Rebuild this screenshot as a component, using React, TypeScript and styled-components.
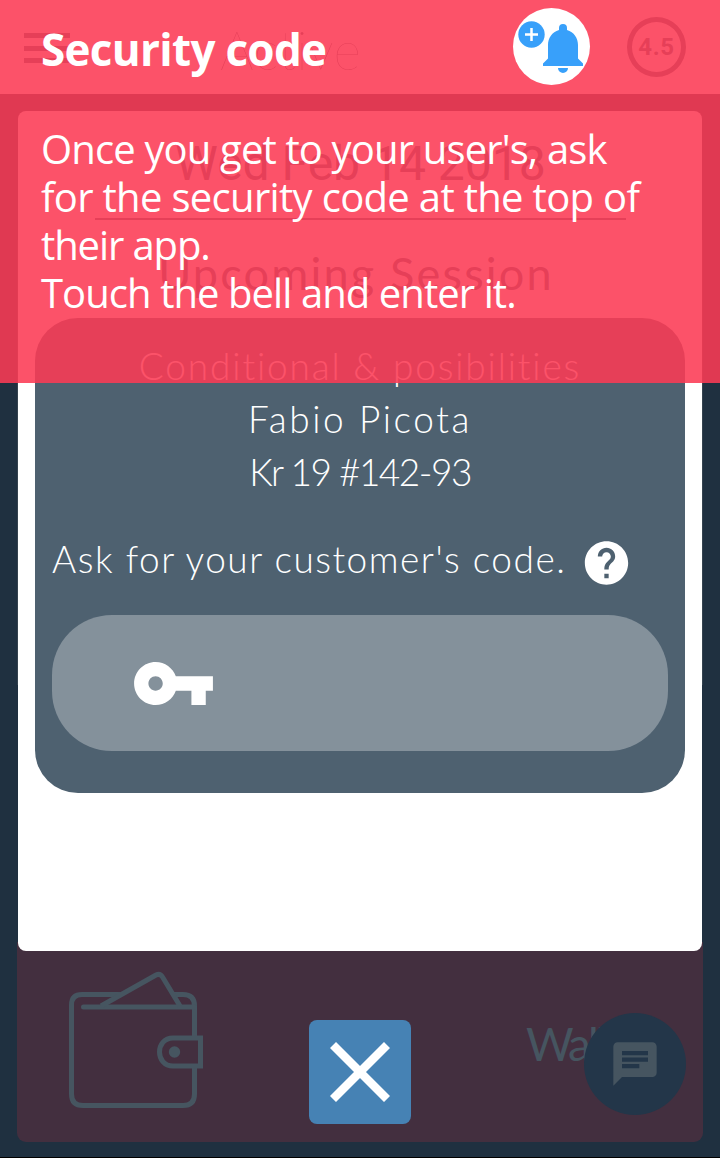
import React from "react";
import styled, { createGlobalStyle } from "styled-components";

const Global = createGlobalStyle`
  *, *::before, *::after { box-sizing: border-box; }
  body { margin: 0; background: #1f3040; }
  p, h1, h2 { margin: 0; font-weight: inherit; }
`;

const slate = "#4e6170";
const round = `Lato, "Open Sans", sans-serif`;
const exo = `"Open Sans", "Noto Sans", sans-serif`;

const Screen = styled.div`
  position: relative;
  width: 720px;
  height: 1158px;
  overflow: hidden;
  display: flex;
  flex-direction: column;
  background: #1f3040;
  border-bottom: 1px solid #000;
`;

const Header = styled.header`
  flex: none;
  height: 94px;
  padding: 0 34px 0 24px;
  display: flex;
  align-items: center;
  background: #fff;
  color: ${slate};
`;

const MenuIcon = styled.div`
  width: 46px;
  height: 30px;
  margin-top: 2px;
  display: flex;
  flex-direction: column;
  justify-content: space-between;
  i { height: 5px; background: ${slate}; }
`;

const Status = styled.h2`
  margin: 6px 0 0 150px;
  font: 100 53px/60px ${round};
  letter-spacing: 0.4px;
`;

const Rating = styled.div`
  width: 59px;
  height: 60px;
  margin-left: auto;
  border: 5px solid ${slate};
  border-radius: 50%;
  font: 700 24px/51px Roboto, sans-serif;
  letter-spacing: 0.6px;
  text-align: center;
`;

const Card = styled.main`
  flex: none;
  height: 840px;
  padding: 0 17px;
  border-radius: 8px;
  background: #fff;
  color: ${slate};
`;

const DateLine = styled.div`
  width: 531px;
  height: 109px;
  margin: 0 0 0 60px;
  padding-top: 25px;
  border-bottom: 2px solid ${slate};
  font: 400 48px/56px Roboto, sans-serif;
  text-align: center;
  white-space: nowrap;
`;

const Upcoming = styled.h2`
  height: 98px;
  padding: 26px 8px 0 0;
  font: 400 45px/54px ${round};
  letter-spacing: 2.2px;
  text-align: center;
`;

const Session = styled.section`
  height: 475px;
  padding: 21px 17px 0;
  border-radius: 43px;
  background: ${slate};
  color: #fff;
`;

const Detail = styled.p<{ $ls: number }>`
  height: 53px;
  font: 300 37px/53px ${round};
  letter-spacing: ${(p) => p.$ls}px;
  text-align: center;
  white-space: nowrap;
`;

const Ask = styled.div`
  display: flex;
  align-items: flex-start;
  height: 53px;
  margin-top: 34px;
  font: 300 37px/53px ${round};
  letter-spacing: 1.5px;
  white-space: nowrap;
  span { width: 528px; }
  svg { margin-top: 5px; flex: none; }
`;

const CodeField = styled.div`
  height: 136px;
  margin-top: 30px;
  padding-left: 82px;
  display: flex;
  align-items: center;
  border-radius: 60px;
  background: #84919b;
`;

const Wallet = styled.section`
  position: relative;
  flex: none;
  height: 200px;
  margin: -9px 17px 0;
  padding: 28px 0 0 50px;
  display: flex;
  border-radius: 0 0 9px 9px;
  background: #432f3f;
  z-index: 0;
`;

const CardLayer = styled.div`
  position: relative;
  z-index: 1;
  margin: 17px 17px 0;
  padding: 0 1px;
  background: linear-gradient(#35434f, #35434f) 0 129px / 100% 445px no-repeat;
`;

const WalletLabel = styled.span`
  margin: 46px 0 0 321px;
  font: 400 46px/56px ${round};
  letter-spacing: -3px;
  color: #465560;
`;

const Fab = styled.div`
  position: absolute;
  left: 584px;
  top: 1013px;
  z-index: 2;
  width: 102px;
  height: 102px;
  border-radius: 50%;
  background: #233649;
  display: flex;
  align-items: center;
  justify-content: center;
`;

const Close = styled.button`
  position: absolute;
  left: 309px;
  top: 1020px;
  z-index: 2;
  width: 102px;
  height: 104px;
  padding: 0;
  border: 0;
  border-radius: 8px;
  background: #4682b4;
  display: flex;
  align-items: center;
  justify-content: center;
`;

const Coach = styled.aside`
  position: absolute;
  left: 0;
  top: 0;
  z-index: 3;
  width: 720px;
  height: 383px;
  padding: 19px 0 0 41px;
  background: rgba(252, 58, 84, 0.88);
  color: #fff;
`;

const CoachTitle = styled.h1`
  height: 106px;
  font: 700 44px/60px ${exo};
  letter-spacing: -0.7px;
  white-space: nowrap;
`;

const CoachLine = styled.p<{ $ls: number }>`
  font: 400 40px/48px ${exo};
  letter-spacing: ${(p) => p.$ls}px;
  white-space: nowrap;
`;

const Bell = styled.div`
  position: absolute;
  left: 513px;
  top: 8px;
  width: 77px;
  height: 77px;
  border-radius: 50%;
  background: #fff;
`;

export default function App() {
  return (
    <>
      <Global />
      <Screen>
        <Header>
          <MenuIcon><i /><i /><i /></MenuIcon>
          <Status>Active</Status>
          <Rating>4.5</Rating>
        </Header>
        <CardLayer>
          <Card>
            <DateLine>Wed Feb 14 2018</DateLine>
            <Upcoming>Upcoming Session</Upcoming>
            <Session>
              <Detail $ls={1.85}>Conditional &amp; posibilities</Detail>
              <Detail $ls={2.6}>Fabio Picota</Detail>
              <Detail $ls={-1.5}>Kr 19 #142-93</Detail>
              <Ask>
                <span>Ask for your customer's code.</span>
                <svg width="53" height="52" viewBox="0 0 24 24">
                  <path fill="#fff" d="M12 2C6.48 2 2 6.48 2 12s4.48 10 10 10 10-4.48 10-10S17.52 2 12 2zm1 17h-2v-2h2v2zm2.07-7.75l-.9.92C13.45 12.9 13 13.5 13 15h-2v-.5c0-1.1.45-2.1 1.17-2.83l1.24-1.26c.37-.36.59-.86.59-1.41 0-1.1-.9-2-2-2s-2 .9-2 2H8c0-2.21 1.79-4 4-4s4 1.79 4 4c0 .88-.36 1.68-.93 2.25z" />
                </svg>
              </Ask>
              <CodeField>
                <svg width="79" height="43" viewBox="1 6 22 12">
                  <path fill="#fff" d="M12.65 10C11.83 7.67 9.61 6 7 6c-3.31 0-6 2.69-6 6s2.69 6 6 6c2.61 0 4.83-1.67 5.65-4H17v4h4v-4h2v-4H12.65zM7 14c-1.1 0-2-.9-2-2s.9-2 2-2 2 .9 2 2-.9 2-2 2z" />
                </svg>
              </CodeField>
            </Session>
          </Card>
        </CardLayer>
        <Wallet>
          <svg width="138" height="140" viewBox="67 970 138 140" fill="none" stroke="#465560" strokeWidth="5">
            <path d="M194.500 1036V1006Q194.500 994.500 183 994.500H174M122 994.500H82Q71.500 994.500 71.500 1005V1094Q71.500 1105.500 83 1105.500H183Q194.500 1105.500 194.500 1094V1068" />
            <path d="M83.500 1007H194" strokeLinecap="round" />
            <path d="M101 1006L156 975Q160 973 162.500 977L180 1006" />
            <path d="M200.500 1038H173C155 1038 155 1066 173 1066H200.500Z" />
            <circle cx="174.500" cy="1052" r="5.700" fill="#465560" stroke="none" />
          </svg>
          <WalletLabel>Wallet</WalletLabel>
        </Wallet>
        <Fab>
          <svg width="52" height="52" viewBox="0 0 24 24">
            <path fill="#465560" d="M20 2H4c-1.100 0-2 .9-2 2v18l4-4h14c1.100 0 2-.9 2-2V4c0-1.100-.9-2-2-2zM6 9h12v2H6V9zm8 5H6v-2h8v2zm4-6H6V6h12v2z" />
          </svg>
        </Fab>
        <Close aria-label="Close">
          <svg width="60" height="60" viewBox="0 0 60 60" stroke="#fff" strokeWidth="8.500">
            <path d="M3 3L57 57M57 3L3 57" />
          </svg>
        </Close>
        <Coach>
          <CoachTitle>Security code</CoachTitle>
          <CoachLine $ls={-0.85}>Once you get to your user's, ask</CoachLine>
          <CoachLine $ls={-0.68}>for the security code at the top of</CoachLine>
          <CoachLine $ls={-1.1}>their app.</CoachLine>
          <CoachLine $ls={-0.93}>Touch the bell and enter it.</CoachLine>
          <Bell>
            <svg width="77" height="77" viewBox="0 0 77 77">
              <circle cx="18.500" cy="26.500" r="13.200" fill="#38a0fa" />
              <path d="M12 26.500H25M18.500 20V33" stroke="#fff" strokeWidth="2.500" />
              <path fill="#38a0fa" d="M46 22V20a4 4 0 0 1 8 0v2c7 2 11 8 11 15v13.500l5 5V58H30v-2.500l5-5V37c0-7 4-13 11-15zM45 60H55a5 5 0 0 1-10 0z" />
            </svg>
          </Bell>
        </Coach>
      </Screen>
    </>
  );
}
